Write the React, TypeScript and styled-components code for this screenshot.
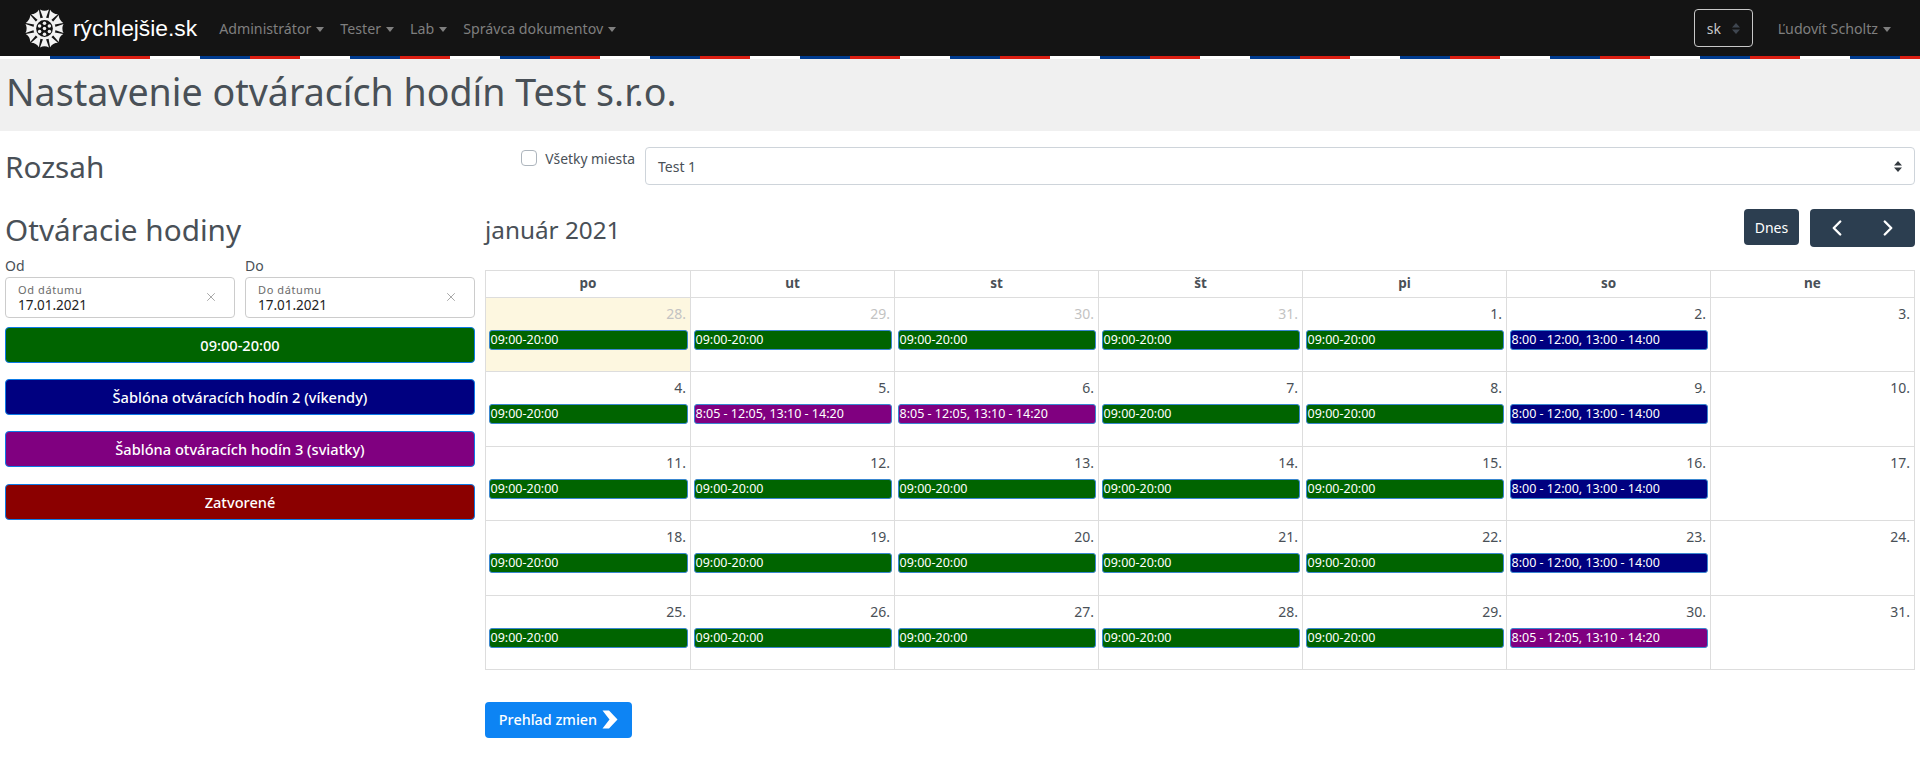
import React from "react";
import styled, { createGlobalStyle } from "styled-components";
import { ChevronLeft, ChevronRight, X } from "lucide-react";

const Global = createGlobalStyle`
  html, body { margin: 0; padding: 0; background: #fff; overflow: hidden; }
  body { font-family: "Noto Sans", "Open Sans", sans-serif; font-size: 14px; color: #495057; }
  * { box-sizing: border-box; }
`;

const Navbar = styled.nav`
  height: 56px; background: #141414; display: flex; align-items: center; padding: 0 22px 0 25px;
`;
const Brand = styled.div`
  display: flex; align-items: center; gap: 9px; margin-right: 22px; color: #fff;
  font: 22.8px "Liberation Sans", Arial, sans-serif;
`;
const NavItem = styled.div<{ $last?: boolean }>`
  color: #7f7f7f; font-size: 14.2px; margin-right: ${p => (p.$last ? 7 : 16)}px; display: flex; align-items: center; gap: 5px; white-space: nowrap;
`;
const Caret = styled.span`
  width: 0; height: 0; border-left: 4.5px solid transparent; border-right: 4.5px solid transparent;
  border-top: 5px solid #7f7f7f; margin-top: 2px;
`;
const Spacer = styled.div`flex: 1;`;
const LangSelect = styled.div`
  width: 59px; height: 38px; border: 1px solid #c8c8c8; border-radius: 4px; color: #c8c8c8; display: flex;
  align-items: center; justify-content: space-between; padding: 0 12px; margin-right: 25px; font-size: 14px;
`;
const UpDown = styled.svg`width: 8px; height: 11px; flex: none;`;
const Stripe = styled.div`
  height: 3px;
  background: repeating-linear-gradient(90deg, #fff 0 50px, #003b8f 50px 100px, #dc1e12 100px 150px);
`;
const TitleBand = styled.div`
  height: 72px; background: #f0f0f0; padding-left: 6px; display: flex; align-items: center;
`;
const Title = styled.h1`
  margin: 0; font-size: 37.6px; font-weight: 400; color: #495057; line-height: 1.2; position: relative; top: -3px;
`;
const Main = styled.main`
  display: grid; grid-template-columns: 470px 1fr; column-gap: 10px; padding: 0 5px;
`;
const SectionTitle = styled.h2`
  margin: 0; font-size: 29.7px; font-weight: 400; line-height: 1.2; color: #495057;
`;
const RangeCell = styled.div`padding-top: 18px; height: 78px;`;
const FilterRow = styled.div`
  display: flex; justify-content: flex-end; align-items: flex-start; padding-top: 16px; height: 78px;
`;
const CheckLabel = styled.label`
  display: flex; align-items: center; gap: 8px; margin-right: 10px; height: 16px; margin-top: 3px; font-size: 13.9px; color: #495057;
`;
const CheckBox = styled.span`
  width: 16px; height: 16px; border: 1px solid #adb5bd; border-radius: 4px; background: #fff; display: block;
`;
const SelectBox = styled.div`
  flex: 0 0 1270px; height: 38px; border: 1px solid #ced4da; border-radius: 4px; padding: 0 12px; display: flex;
  align-items: center; justify-content: space-between; font-size: 14px; color: #495057;
`;
const Sidebar = styled.aside`display: flex; flex-direction: column; padding-top: 3px;`;
const DateRow = styled.div`display: grid; grid-template-columns: 230px 230px; column-gap: 10px; margin-top: 8px;`;
const FieldLabel = styled.div`font-size: 14px; line-height: 20px; margin-bottom: 1px; color: #495057;`;
const DateBox = styled.div`
  height: 41px; border: 1px solid #ccc; border-radius: 4px; padding: 5px 12px; position: relative; margin-bottom: 9px;
`;
const DateHint = styled.div`font-size: 11px; line-height: 13px; color: #6b6b6b; letter-spacing: .6px;`;
const DateValue = styled.div`font-size: 13.5px; line-height: 18px; color: #222;`;
const Clear = styled.span`position: absolute; right: 16px; top: 12px; color: #777; display: flex;`;
const TemplateButton = styled.button<{ $bg: string }>`
  width: 100%; height: 36px; margin-bottom: 16.33px; background: ${p => p.$bg}; color: #fff; border: 1px solid #0d7ae6;
  border-radius: 4px; font: 500 14.6px "Noto Sans", sans-serif; padding: 0;
`;
const CalendarCol = styled.section`display: flex; flex-direction: column;`;
const CalHeader = styled.div`
  display: flex; align-items: flex-start; height: 61px; padding-top: 0;
`;
const MonthTitle = styled.h3`
  margin: 0 auto 0 0; font-size: 24.3px; font-weight: 400; line-height: 38px; color: #495057; position: relative; top: 2px;
`;
const DarkBtn = styled.button`
  height: 36px; width: 55px; background: #2c3e50; color: #fff; border: 0; border-radius: 4px; font: 14px "Noto Sans", sans-serif; padding: 0;
`;
const NavBtns = styled.div`
  margin-left: 11px; width: 105px; height: 38px; background: #2c3e50; color: #fff; border-radius: 4px; display: flex;
  align-items: center; justify-content: space-between; padding: 0 14px;
`;
const CalTable = styled.div`
  display: grid; grid-template-columns: 205px repeat(5, 204px) 1fr; border-top: 1px solid #ddd; border-left: 1px solid #ddd;
`;
const HeadCell = styled.div`
  height: 27px; border-right: 1px solid #ddd; border-bottom: 1px solid #ddd; text-align: center; font-weight: 700;
  font-size: 13.5px; line-height: 25px; color: #495057;
`;
const DayCell = styled.div<{ $today?: boolean }>`
  height: 74.4px; border-right: 1px solid #ddd; border-bottom: 1px solid #ddd; padding: 3px 2px 0 2.5px;
  background: ${p => (p.$today ? "#fdf7e0" : "#fff")};
`;
const DayNum = styled.div<{ $muted?: boolean }>`
  text-align: right; font-size: 14px; line-height: 25px; height: 29px; padding-right: 2px;
  color: ${p => (p.$muted ? "#c3c3c3" : "#495057")};
`;
const Event = styled.div<{ $bg: string }>`
  height: 20px; background: ${p => p.$bg}; border: 1px solid #3a87d0; border-radius: 3px; color: #fff; font-size: 12.5px;
  line-height: 18px; padding-left: 1px; white-space: nowrap; overflow: hidden;
`;
const Footer = styled.div`padding-top: 32px;`;
const ChangesBtn = styled.button`
  width: 147px; height: 36px; background: #0d84f4; color: #fff; border: 0; border-radius: 4px; font: 500 14.4px "Noto Sans", sans-serif;
  display: flex; align-items: center; justify-content: center; gap: 5px; padding: 0;
`;
const BigChevron = styled.svg`width: 16px; height: 19px; flex: none;`;

const Logo = () => (
  <svg width="39" height="39" viewBox="-20 -20 40 40" aria-hidden="true">
    {Array.from({ length: 12 }, (_, i) => (
      <g key={i} transform={`rotate(${i * 30})`} fill="#f2f2f2">
        <path d="M-1.2 -10 L1.2 -10 L4.6 -19.5 Q0 -17 -4.6 -19.5 Z" />
      </g>
    ))}
    <circle r="10" fill="#141414" stroke="#f2f2f2" strokeWidth="2.8" />
    {[[0, -5.5], [5, -2.5], [5, 3], [0, 6], [-5, 3], [-5, -2.5], [0, 0]].map(([x, y], i) => (
      <circle key={i} cx={x} cy={y} r="1.8" fill="#f2f2f2" />
    ))}
  </svg>
);

const Arrows = ({ color }: { color: string }) => (
  <UpDown viewBox="0 0 8 11" aria-hidden="true">
    <path d="M4 0 L8 4.4 H0 Z M4 11 L8 6.6 H0 Z" fill={color} />
  </UpDown>
);

const G = "#006400", N = "#000080", P = "#800080";
const T1 = "09:00-20:00", T2 = "8:05 - 12:05, 13:10 - 14:20", T3 = "8:00 - 12:00, 13:00 - 14:00";
type Day = { n: number; muted?: boolean; today?: boolean; ev?: [string, string] };
const g: [string, string] = [T1, G], n: [string, string] = [T3, N], p: [string, string] = [T2, P];
const days: Day[] = [
  { n: 28, muted: true, today: true, ev: g }, { n: 29, muted: true, ev: g }, { n: 30, muted: true, ev: g }, { n: 31, muted: true, ev: g }, { n: 1, ev: g }, { n: 2, ev: n }, { n: 3 },
  { n: 4, ev: g }, { n: 5, ev: p }, { n: 6, ev: p }, { n: 7, ev: g }, { n: 8, ev: g }, { n: 9, ev: n }, { n: 10 },
  { n: 11, ev: g }, { n: 12, ev: g }, { n: 13, ev: g }, { n: 14, ev: g }, { n: 15, ev: g }, { n: 16, ev: n }, { n: 17 },
  { n: 18, ev: g }, { n: 19, ev: g }, { n: 20, ev: g }, { n: 21, ev: g }, { n: 22, ev: g }, { n: 23, ev: n }, { n: 24 },
  { n: 25, ev: g }, { n: 26, ev: g }, { n: 27, ev: g }, { n: 28, ev: g }, { n: 29, ev: g }, { n: 30, ev: p }, { n: 31 },
];

export default function App() {
  return (
    <>
      <Global />
      <Navbar>
        <Brand><Logo />rýchlejšie.sk</Brand>
        {["Administrátor", "Tester", "Lab", "Správca dokumentov"].map(t => (
          <NavItem key={t}>{t}<Caret /></NavItem>
        ))}
        <Spacer />
        <LangSelect>sk<Arrows color="#3f4650" /></LangSelect>
        <NavItem $last>Ľudovít Scholtz<Caret /></NavItem>
      </Navbar>
      <Stripe />
      <TitleBand><Title>Nastavenie otváracích hodín Test s.r.o.</Title></TitleBand>
      <Main>
        <RangeCell><SectionTitle>Rozsah</SectionTitle></RangeCell>
        <FilterRow>
          <CheckLabel><CheckBox />Všetky miesta</CheckLabel>
          <SelectBox>Test 1<Arrows color="#343a40" /></SelectBox>
        </FilterRow>
        <Sidebar>
          <SectionTitle>Otváracie hodiny</SectionTitle>
          <DateRow>
            {[["Od", "Od dátumu"], ["Do", "Do dátumu"]].map(([l, h]) => (
              <div key={l}>
                <FieldLabel>{l}</FieldLabel>
                <DateBox>
                  <DateHint>{h}</DateHint>
                  <DateValue>17.01.2021</DateValue>
                  <Clear><X size={14} strokeWidth={1.1} /></Clear>
                </DateBox>
              </div>
            ))}
          </DateRow>
          <TemplateButton $bg="#006400">09:00-20:00</TemplateButton>
          <TemplateButton $bg="#000080">Šablóna otváracích hodín 2 (víkendy)</TemplateButton>
          <TemplateButton $bg="#800080">Šablóna otváracích hodín 3 (sviatky)</TemplateButton>
          <TemplateButton $bg="#8b0000">Zatvorené</TemplateButton>
        </Sidebar>
        <CalendarCol>
          <CalHeader>
            <MonthTitle>január 2021</MonthTitle>
            <DarkBtn>Dnes</DarkBtn>
            <NavBtns><ChevronLeft size={26} strokeWidth={2.2} /><ChevronRight size={26} strokeWidth={2.2} /></NavBtns>
          </CalHeader>
          <CalTable>
            {["po", "ut", "st", "št", "pi", "so", "ne"].map(d => <HeadCell key={d}>{d}</HeadCell>)}
            {days.map((d, i) => (
              <DayCell key={i} $today={d.today}>
                <DayNum $muted={d.muted}>{d.n}.</DayNum>
                {d.ev && <Event $bg={d.ev[1]}>{d.ev[0]}</Event>}
              </DayCell>
            ))}
          </CalTable>
          <Footer>
            <ChangesBtn>Prehľad zmien
              <BigChevron viewBox="0 0 16 19" aria-hidden="true"><path d="M0.5 0.5 H7 L15.5 9.5 L7 18.5 H0.5 L7.5 9.5 Z" fill="#fff" /></BigChevron>
            </ChangesBtn>
          </Footer>
        </CalendarCol>
      </Main>
    </>
  );
}
